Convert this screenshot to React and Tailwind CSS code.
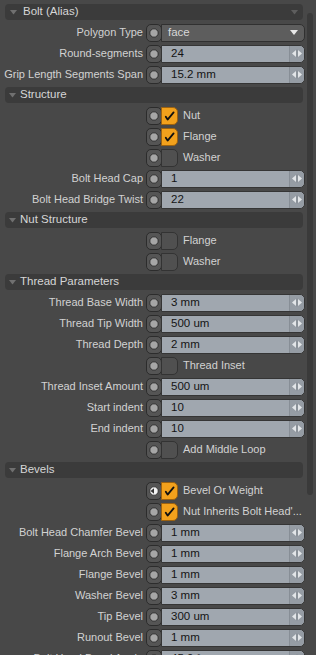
import React from "react";

const FONT = { fontFamily: '"Liberation Sans", Arial, sans-serif' };

function Tri({ className = "" }) {
  return (
    <svg width="7" height="5" viewBox="0 0 7 5" className={className}>
      <polygon points="0,0 7,0 3.5,4.5" fill="currentColor" />
    </svg>
  );
}

function Header({ title, top = false }) {
  return (
    <div className="h-[20px] flex items-center">
      <div className="ml-[5px] mr-[2px] flex-1 h-[16px] rounded-[4px] bg-[#3b3b3b] flex items-center">
        <Tri className={`text-[#707070] ${top ? "ml-[5px] mr-[6px]" : "ml-[4px] mr-[4px]"}`} />
        <span className="text-[11.5px] text-[#d6d6d6] leading-none">{title}</span>
        {top && <Tri className="ml-auto mr-[5px] text-[#5e5e5e]" />}
      </div>
    </div>
  );
}

function Dot({ anim = false }) {
  return (
    <div className="w-[16px] h-[18px] shrink-0 rounded-[5px] bg-[#555555] border border-[#2c2c2c] flex items-center justify-center">
      {anim ? (
        <svg width="10" height="10" viewBox="0 0 10 10">
          <circle cx="5" cy="5" r="4.2" fill="#f2f2f2" stroke="#2a2a2a" strokeWidth="0.8" />
          <polygon points="1.5,5 5,2.3 5,7.7" fill="#333" />
        </svg>
      ) : (
        <svg width="10" height="10" viewBox="0 0 10 10">
          <circle cx="5" cy="5" r="4.2" fill="#a6a6a6" stroke="#2a2a2a" strokeWidth="0.9" />
        </svg>
      )}
    </div>
  );
}

function Label({ children }) {
  return (
    <div className="w-[146px] shrink-0 pr-[3px] text-right text-[11px] text-[#d2d2d2] whitespace-nowrap leading-none">
      {children}
    </div>
  );
}

function Arrows() {
  return (
    <div className="w-[15px] h-full shrink-0 bg-[#959ca4] border-l border-[#878e96] rounded-r-[5px] flex items-center justify-center">
      <svg width="10" height="9" viewBox="0 0 10 9">
        <polygon points="0,4.5 4,1 4,8" fill="#e2e5e8" />
        <rect x="4.6" y="0.5" width="0.8" height="8" fill="#7d848b" />
        <polygon points="10,4.5 6,1 6,8" fill="#e2e5e8" />
      </svg>
    </div>
  );
}

function NumRow({ label, value, anim }) {
  return (
    <div className="h-[21px] flex items-center">
      <Label>{label}</Label>
      <Dot anim={anim} />
      <div className="flex-1 h-[18px] ml-[-1px] rounded-r-[5px] bg-[#a0a7af] border border-[#353535] flex items-center">
        <span className="flex-1 pl-[9px] text-[11.5px] text-[#141414] leading-none">{value}</span>
        <Arrows />
      </div>
    </div>
  );
}

function DropRow({ label, value }) {
  return (
    <div className="h-[21px] flex items-center">
      <Label>{label}</Label>
      <Dot />
      <div className="flex-1 h-[18px] ml-[-1px] rounded-r-[5px] bg-[#5d5d5d] border border-[#303030] flex items-center">
        <span className="flex-1 pl-[6px] text-[11.5px] text-[#d8d8d8] leading-none">{value}</span>
        <svg width="8" height="5" viewBox="0 0 8 5" className="mr-[6px]">
          <polygon points="0,0 8,0 4,5" fill="#e8e8e8" />
        </svg>
      </div>
    </div>
  );
}

function CheckRow({ label, checked, anim }) {
  return (
    <div className="h-[21px] flex items-center">
      <div className="w-[146px] shrink-0" />
      <Dot anim={anim} />
      <div
        className={`w-[17px] h-[18px] shrink-0 ml-[-1px] rounded-r-[5px] border flex items-center justify-center ${
          checked ? "bg-[#f2a11c] border-[#9c6210]" : "bg-[#505050] border-[#333333]"
        }`}
      >
        {checked && (
          <svg width="11" height="10" viewBox="0 0 11 10">
            <path d="M1.8 5.8 L3.6 8.6 L9.6 1.4" fill="none" stroke="#111" strokeWidth="1.8" strokeLinecap="round" strokeLinejoin="round" />
          </svg>
        )}
      </div>
      <span className="pl-[5px] text-[11px] text-[#d2d2d2] leading-none whitespace-nowrap">
        {label}
      </span>
    </div>
  );
}

export default function App() {
  return (
    <div className="w-[316px] h-[655px] overflow-hidden bg-[#484848] flex" style={FONT}>
      <div className="w-[306px] shrink-0 pt-[2px] pr-[1px]">
        <Header title="Bolt (Alias)" top />
        <DropRow label="Polygon Type" value="face" />
        <NumRow label="Round-segments" value="24" />
        <NumRow label="Grip Length Segments Span" value="15.2 mm" />
        <Header title="Structure" />
        <CheckRow label="Nut" checked />
        <CheckRow label="Flange" checked />
        <CheckRow label="Washer" />
        <NumRow label="Bolt Head Cap" value="1" />
        <NumRow label="Bolt Head Bridge Twist" value="22" />
        <Header title="Nut Structure" />
        <CheckRow label="Flange" />
        <CheckRow label="Washer" />
        <Header title="Thread Parameters" />
        <NumRow label="Thread Base Width" value="3 mm" />
        <NumRow label="Thread Tip Width" value="500 um" />
        <NumRow label="Thread Depth" value="2 mm" />
        <CheckRow label="Thread Inset" />
        <NumRow label="Thread Inset Amount" value="500 um" />
        <NumRow label="Start indent" value="10" />
        <NumRow label="End indent" value="10" />
        <CheckRow label="Add Middle Loop" />
        <Header title="Bevels" />
        <CheckRow label="Bevel Or Weight" checked anim />
        <CheckRow label="Nut Inherits Bolt Head'..." checked />
        <NumRow label="Bolt Head Chamfer Bevel" value="1 mm" />
        <NumRow label="Flange Arch Bevel" value="1 mm" />
        <NumRow label="Flange Bevel" value="1 mm" />
        <NumRow label="Washer Bevel" value="3 mm" />
        <NumRow label="Tip Bevel" value="300 um" />
        <NumRow label="Runout Bevel" value="1 mm" />
        <NumRow label="Bolt Head Bevel Angle" value="45.0 °" />
      </div>
      <div className="flex-1 relative">
        <div className="absolute left-[1px] top-[13px] w-[6px] h-[482px] rounded-[3px] bg-[#3a3a3a]" />
      </div>
    </div>
  );
}
